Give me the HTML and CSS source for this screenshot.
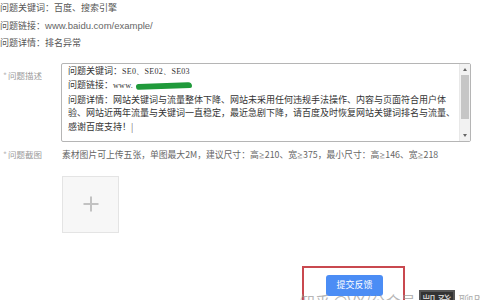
FILE: index.html
```html
<!DOCTYPE html>
<html lang="zh">
<head>
<meta charset="utf-8">
<link rel="stylesheet" href="styles.css">
</head>
<body>
<div class="page">
  <div class="info">
    <div class="line">问题关键词：百度、搜索引擎</div>
    <div class="line">问题链接：<span class="url">www.baidu.com/example/</span></div>
    <div class="line">问题详情：排名异常</div>
  </div>

  <div class="row row-desc">
    <div class="label"><span class="star">*</span>问题描述</div>
    <div class="textarea">
      <div class="ta-text">
        <div>问题关键词：<span class="mono">SE0、SE02、SE03</span></div>
        <div>问题链接：<span class="mono">www.</span><span class="blot"></span></div>
        <div>问题详情：网站关键词与流量整体下降、网站未采用任何违规手法操作、内容与页面符合用户体</div>
        <div>验、网站近两年流量与关键词一直稳定，最近急剧下降，请百度及时恢复网站关键词排名与流量、</div>
        <div>感谢百度支持！<span class="caret">|</span></div>
      </div>
      <div class="scrollbar">
        <span class="arrow up"></span>
        <span class="thumb"></span>
        <span class="arrow down"></span>
      </div>
    </div>
  </div>

  <div class="row row-shot">
    <div class="label"><span class="star">*</span>问题截图</div>
    <div class="shot">
      <div class="hint">素材图片可上传五张，单图最大2M，建议尺寸：高<span class="ge">≧</span>210、宽<span class="ge">≧</span>375，最小尺寸：高<span class="ge">≧</span>146、宽<span class="ge">≧</span>218</div>
      <div class="upload"><span class="plus"></span></div>
    </div>
  </div>

  <div class="actions">
    <div class="highlight">
      <button class="submit">提交反馈</button>
    </div>
  </div>

  <div class="watermark">知乎 @VX/公众号 <span class="boxed">凯登</span> 聊跳</div>
</div>
</body>
</html>
```

FILE: styles.css
```css
html, body {
  margin: 0;
  padding: 0;
  background: #fff;
}
.page {
  position: relative;
  width: 480px;
  height: 300px;
  overflow: hidden;
  font-family: "Microsoft YaHei", "Noto Sans CJK SC", "Noto Sans", sans-serif;
  font-size: 9px;
  color: #555;
}
.info {
  margin-top: -1px;
}
.line {
  height: 17.5px;
  line-height: 17.5px;
  white-space: nowrap;
  color: #555;
}
.url {
  font-family: "Liberation Sans", Arial, sans-serif;
  font-size: 9.5px;
  color: #666;
}
.row {
  display: flex;
}
.label {
  width: 61px;
  flex: none;
  color: #9a9a9a;
  font-size: 8.5px;
  white-space: nowrap;
}
.star {
  display: inline-block;
  width: 8px;
  padding-left: 3px;
  box-sizing: border-box;
  color: #bbb;
}
.row-desc {
  margin-top: 11px;
}
.row-desc .label {
  padding-top: 6px;
}
.textarea {
  position: relative;
  width: 410px;
  height: 79px;
  box-sizing: border-box;
  border: 1px solid #b5b5b5;
  border-radius: 2px;
  display: flex;
  background: #fff;
}
.ta-text {
  flex: 1;
  padding: 0 0 0 6px;
  font-family: "Noto Sans CJK SC", sans-serif;
  font-size: 9px;
  line-height: 13.5px;
  color: #333;
  white-space: nowrap;
  overflow: hidden;
}
.mono {
  font-family: "Liberation Serif", serif;
  font-size: 8px;
  letter-spacing: 0.3px;
}
.blot {
  display: inline-block;
  width: 56px;
  height: 6px;
  margin-left: 3px;
  vertical-align: middle;
  background: #1f9a3a;
  border-radius: 4px 6px 3px 5px;
  transform: rotate(-2deg);
}
.caret {
  font-weight: 300;
  color: #222;
}
.scrollbar {
  width: 10px;
  flex: none;
  display: flex;
  flex-direction: column;
  align-items: center;
  background: #f2f2f2;
  border-left: 1px solid #e8e8e8;
}
.arrow {
  width: 0;
  height: 0;
  border-left: 2.5px solid transparent;
  border-right: 2.5px solid transparent;
  margin: 4px 0;
}
.arrow.up {
  border-bottom: 3px solid #666;
}
.arrow.down {
  border-top: 3px solid #666;
}
.thumb {
  width: 8px;
  height: 44px;
  background: #c6c6c6;
}
.scrollbar .arrow.down {
  margin-top: auto;
}
.row-shot {
  margin-top: 6px;
}
.row-shot .label {
  line-height: 13px;
}
.shot {
  display: flex;
  flex-direction: column;
  padding-left: 1px;
}
.hint {
  font-size: 8.8px;
  line-height: 13px;
  color: #666;
  white-space: nowrap;
}
.ge {
  font-size: 6px;
}
.upload {
  position: relative;
  margin-top: 14px;
  width: 57px;
  height: 57px;
  box-sizing: border-box;
  border: 1px solid #e4e4e4;
  background: #f7f7f7;
}
.plus::before,
.plus::after {
  content: "";
  position: absolute;
  background: #c2c2c2;
  left: 50%;
  top: 50%;
}
.plus::before {
  width: 15px;
  height: 2px;
  transform: translate(-50%, -50%);
}
.plus::after {
  width: 2px;
  height: 15px;
  transform: translate(-50%, -50%);
}
.actions {
  display: flex;
  padding-left: 302px;
  margin-top: 33px;
}
.highlight {
  width: 103px;
  height: 50px;
  box-sizing: border-box;
  border: 2px solid #c9484f;
  padding: 7px 0 0 22px;
}
.submit {
  display: block;
  width: 57px;
  height: 21px;
  border: none;
  border-radius: 3px;
  background: #4b8df5;
  color: #fff;
  font-family: "Noto Sans CJK SC", sans-serif;
  font-size: 9px;
  padding: 0;
  line-height: 18px;
}
.watermark {
  position: absolute;
  left: 300px;
  top: 290px;
  font-family: "Noto Sans CJK SC", sans-serif;
  font-size: 15px;
  line-height: 20px;
  color: rgba(150, 150, 150, 0.7);
  white-space: nowrap;
}
.boxed {
  display: inline-block;
  background: #333;
  color: #ccc;
  border: 2px solid #555;
  padding: 0 1px;
  line-height: 18px;
}
```
